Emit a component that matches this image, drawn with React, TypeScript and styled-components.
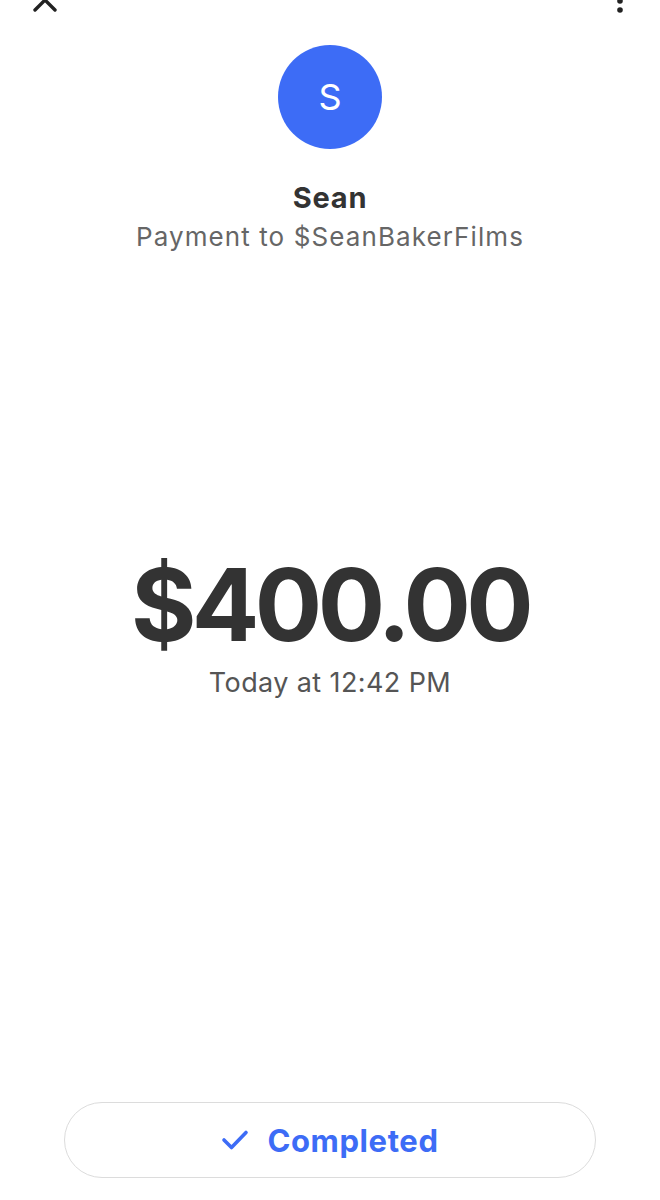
import styled, { createGlobalStyle } from 'styled-components';

const GlobalStyle = createGlobalStyle`
  body {
    margin: 0;
    background: #ffffff;
    font-family: Inter, "Open Sans", sans-serif;
  }
`;

const Page = styled.div`
  width: 660px;
  height: 1200px;
  display: flex;
  flex-direction: column;
  align-items: center;
  overflow: hidden;
  background: #fff;
`;

const TopBar = styled.div`
  width: 100%;
  height: 26px;
  margin-top: -13px;
  display: flex;
  align-items: center;
  justify-content: space-between;
  padding: 0 36px 0 32px;
  box-sizing: border-box;
`;

const Recipient = styled.div`
  display: flex;
  flex-direction: column;
  align-items: center;
  margin-top: 32px;
`;

const Avatar = styled.div`
  width: 104px;
  height: 104px;
  border-radius: 50%;
  background: #3d6cf6;
  color: #fff;
  display: flex;
  align-items: center;
  justify-content: center;
  font-size: 36px;
  font-weight: 400;
`;

const Name = styled.div`
  margin-top: 32px;
  font-size: 29px;
  font-weight: 700;
  letter-spacing: 0.8px;
  color: #333;
  line-height: 34px;
`;

const Subtitle = styled.div`
  margin-top: 6px;
  font-size: 26px;
  letter-spacing: 1.1px;
  color: #666;
  line-height: 32px;
`;

const AmountBlock = styled.div`
  margin-top: 292px;
  display: flex;
  flex-direction: column;
  align-items: center;
`;

const Amount = styled.div`
  font-size: 100px;
  font-weight: 650;
  color: #333;
  line-height: 120px;
  letter-spacing: -4.6px;
`;

const Timestamp = styled.div`
  margin-top: 2px;
  font-size: 27px;
  letter-spacing: 0.4px;
  color: #555;
  line-height: 32px;
`;

const StatusButton = styled.div`
  margin-top: auto;
  margin-bottom: 22px;
  width: 532px;
  height: 76px;
  box-sizing: border-box;
  border: 1px solid #dcdcdc;
  border-radius: 38px;
  display: flex;
  align-items: center;
  justify-content: center;
  gap: 18px;
  color: #3d6cf6;
  font-size: 31px;
  font-weight: 700;
  letter-spacing: 0.6px;
`;

const CloseIcon = () => (
  <svg width="26" height="26" viewBox="0 0 26 26">
    <path d="M3 3 L23 23 M23 3 L3 23" stroke="#222" strokeWidth="3.4" strokeLinecap="round" fill="none" />
  </svg>
);

const MoreIcon = () => (
  <svg width="8" height="26" viewBox="0 0 8 26">
    <circle cx="4" cy="5" r="2.8" fill="#222" />
    <circle cx="4" cy="14" r="2.8" fill="#222" />
    <circle cx="4" cy="23" r="2.8" fill="#222" />
  </svg>
);

const CheckIcon = () => (
  <svg width="28" height="22" viewBox="0 0 28 22">
    <path d="M3 11 L10.5 18.5 L25 3.5" stroke="#3d6cf6" strokeWidth="3.6" strokeLinecap="round" strokeLinejoin="round" fill="none" />
  </svg>
);

export default function App() {
  return (
    <Page>
      <GlobalStyle />
      <TopBar>
        <CloseIcon />
        <MoreIcon />
      </TopBar>
      <Recipient>
        <Avatar>S</Avatar>
        <Name>Sean</Name>
        <Subtitle>Payment to $SeanBakerFilms</Subtitle>
      </Recipient>
      <AmountBlock>
        <Amount>$400.00</Amount>
        <Timestamp>Today at 12:42 PM</Timestamp>
      </AmountBlock>
      <StatusButton>
        <CheckIcon />
        Completed
      </StatusButton>
    </Page>
  );
}
